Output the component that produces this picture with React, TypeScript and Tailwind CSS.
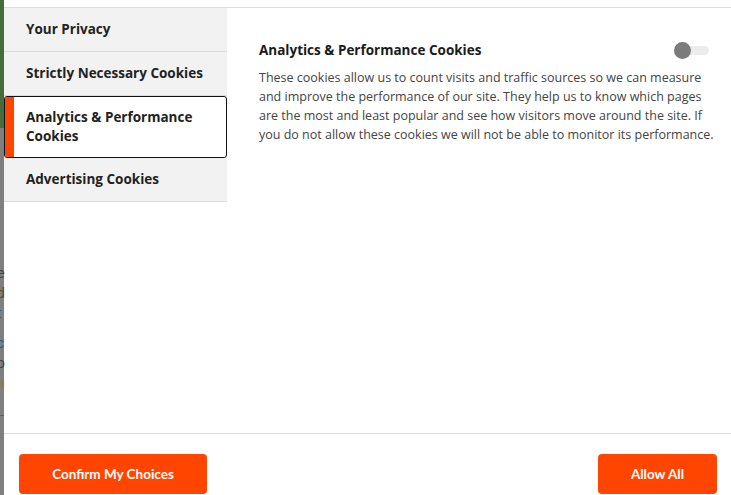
import React from "react";

const navItems = [
  { label: "Your Privacy" },
  { label: "Strictly Necessary Cookies" },
  { label: "Analytics & Performance Cookies", active: true },
  { label: "Advertising Cookies" },
];

export default function App() {
  return (
    <div
      className="relative flex h-[495px] w-[731px] overflow-hidden bg-white"
      style={{ fontFamily: "'Open Sans', 'Noto Sans', sans-serif" }}
    >
      {/* background page peeking at the left edge */}
      <div className="flex w-[4px] shrink-0 flex-col">
        <div className="h-[128px] bg-[#466b3d]" />
        <div className="h-[287px] bg-[#7f7f7f]" />
        <div className="h-[1px] bg-[#5f5f5f]" />
        <div className="flex-1 bg-[#7f7f7f]" />
      </div>
      <div
        className="pointer-events-none absolute left-[-3px] top-[263px] flex flex-col text-[14px] leading-[20px]"
        style={{ fontFamily: "'Liberation Sans', sans-serif" }}
      >
        <span className="text-[#444]">e</span>
        <span className="text-[#5a4a2a]">d</span>
        <span className="text-[#1d5b9a]">t</span>
        <span className="mt-[10px] text-[#1d5b9a]">c</span>
        <span className="text-[#444]">o</span>
        <span className="text-[#b07020]">u</span>
      </div>

      {/* modal */}
      <div className="flex flex-1 flex-col">
        <div className="h-[8px] border-b border-[#dcdcdc]" />
        <div className="flex flex-1">
          <div className="w-[223px] shrink-0">
            <div className="flex flex-col bg-[#f2f2f2]">
              {navItems.map((item) =>
                item.active ? (
                  <div
                    key={item.label}
                    className="flex h-[62px] overflow-hidden rounded-[3px] border border-[#111] bg-white"
                  >
                    <div className="w-[9px] shrink-0 bg-[#ff4500]" />
                    <div className="flex items-center pl-[12px] pr-[16px] text-[13.5px] font-bold leading-[19px] text-[#222]">
                      {item.label}
                    </div>
                  </div>
                ) : (
                  <div
                    key={item.label}
                    className="flex h-[44px] items-center border-b border-[#dcdcdc] pl-[22px] text-[13.5px] font-bold text-[#222]"
                  >
                    {item.label}
                  </div>
                )
              )}
            </div>
          </div>
          <div className="flex-1 pl-[32px] pr-[14px] pt-[33px]">
            <div className="flex items-center justify-between">
              <h3 className="text-[13.5px] font-bold leading-[18px] text-[#1a1a1a]">
                Analytics &amp; Performance Cookies
              </h3>
              <div className="relative mr-[8px] h-[17px] w-[35px]">
                <div className="absolute right-0 top-[4px] h-[9px] w-[26px] rounded-full bg-[#ececec]" />
                <div className="absolute left-0 top-0 h-[17px] w-[17px] rounded-full bg-[#7b7b7b]" />
              </div>
            </div>
            <p className="mt-[9px] text-[12.5px] leading-[19px] text-[#444]">
              These cookies allow us to count visits and traffic sources so we can measure and
              improve the performance of our site. They help us to know which pages are the most
              and least popular and see how visitors move around the site. If you do not allow
              these cookies we will not be able to monitor its performance.
            </p>
          </div>
        </div>
        <div className="flex justify-between border-t border-[#dcdcdc] pb-[1px] pl-[15px] pr-[14px] pt-[20px]">
          <button
            className="h-[40px] w-[188px] rounded-[4px] bg-[#ff4500] text-[13.5px] font-bold text-white"
            style={{ fontFamily: "Lato, sans-serif" }}
          >
            Confirm My Choices
          </button>
          <button
            className="h-[40px] w-[119px] rounded-[4px] bg-[#ff4500] text-[13.5px] font-bold text-white"
            style={{ fontFamily: "Lato, sans-serif" }}
          >
            Allow All
          </button>
        </div>
      </div>
    </div>
  );
}
